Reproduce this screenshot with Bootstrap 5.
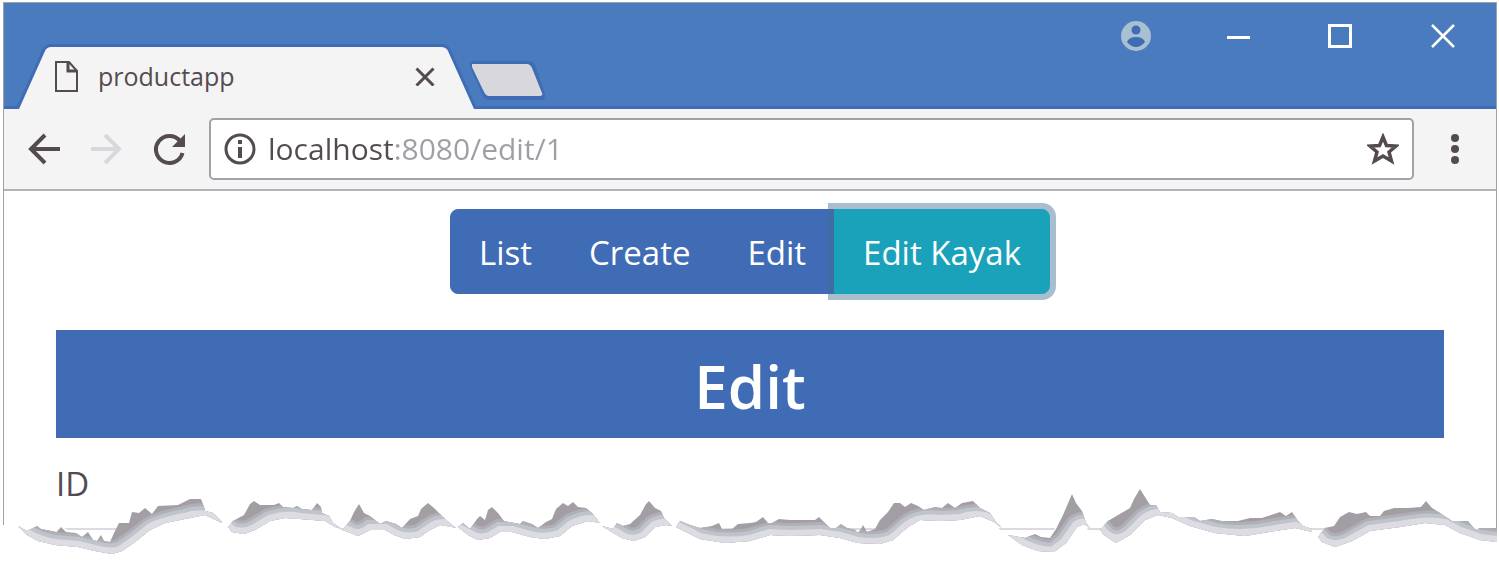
<!DOCTYPE html>
<html lang="en">
<head>
<meta charset="utf-8">
<meta name="viewport" content="width=device-width, initial-scale=1">
<title>productapp</title>
<link href="https://cdn.jsdelivr.net/npm/bootstrap@5.3.0/dist/css/bootstrap.min.css" rel="stylesheet">
<style>
  :root { --ink: #544b50; --frame: #4a7bbe; --edge: #3f6cb4; --line: #a3a1a8; }
  body { font-family: "Open Sans", "Noto Sans", sans-serif; color: var(--ink); background: #fff; }
  svg { display: block; flex: none; }
  .window { padding: 2px 2px 0 3px; }
  .window-frame { border: 1px solid var(--line); border-bottom: 0; }
  .titlebar { background: var(--frame); height: 106px; border-bottom: 3px solid var(--edge); }
  .titlebar button, .toolbar button { border: 0; background: none; padding: 0; }
  .tab { width: 460px; height: 66px; margin: 40px 0 0 12px; padding: 0 41px 0 38px; color: var(--ink); }
  .tab-shape { position: absolute; left: 0; top: 0; }
  .tab-name { font-size: 25px; line-height: 32px; margin-left: 18px; }
  .new-tab { margin: 56px 0 0 -9px; }
  .controls { gap: 72px; margin: 18px 39px 0 0; }
  .toolbar { background: #f4f4f5; height: 82px; padding: 0 27px 0 23px; border-bottom: 2px solid #b4b2b8; }
  .nav-icons { gap: 30px; margin-right: 23px; }
  .address { background: #fff; border: 2px solid var(--line); border-radius: 5px; height: 62px; padding: 0 13px; margin-right: 27px; }
  .address input { border: 0; outline: 0; min-width: 0; margin-left: 12px; padding: 0; font-size: 30px; line-height: 40px; color: #98969c;
    background: linear-gradient(90deg, var(--ink) 126px, #a09ea4 126px); -webkit-background-clip: text; background-clip: text; -webkit-text-fill-color: transparent; }
  .page { padding: 18px 52px 0; }
  .menu .btn { --bs-btn-color: #fff; --bs-btn-bg: #3f6cb4; --bs-btn-border-color: #3f6cb4; --bs-btn-hover-bg: #365d9c; --bs-btn-hover-color: #fff;
    font-size: 33px; line-height: 48px; padding: 19px 28px 16px; border-radius: 8px; }
  .menu .btn.current { --bs-btn-bg: #1aa2ba; --bs-btn-border-color: #1aa2ba; box-shadow: 0 0 0 6px rgba(63, 108, 145, .45); z-index: 2; }
  .banner { background: #3f6cb4; font-size: 60px; font-weight: 600; line-height: 104px; margin: 36px 0 0; padding-top: 4px; }
  .page label { font-size: 33px; line-height: 45px; margin: 23px 0 22px; }
  .page .form-control { border: 2px solid #dbdae0; border-radius: 6px; height: 30px; }
  .tear { position: relative; width: 100%; height: 81px; margin-top: -78px; z-index: 3; }
</style>
</head>
<body>
<div class="window">
  <div class="window-frame">
    <header class="titlebar d-flex align-items-start">
      <div class="tab position-relative d-flex align-items-center">
        <svg class="tab-shape" width="460" height="66" viewBox="0 0 460 66"><path d="M3 66 L29 8 Q31 4 35 4 H425 Q430 4 432 8 L458 66" fill="#f4f4f5" stroke="#3f6cb4" stroke-width="6"/><path d="M3 66 L29 8 Q31 4 35 4 H425 Q430 4 432 8 L458 66Z" fill="#f4f4f5"/></svg>
        <svg class="position-relative" width="26" height="34" viewBox="0 0 26 34" fill="none" stroke="#544b50" stroke-width="2"><path d="M2 3H15L23 12V32H2Z"/><path d="M14 3V12H23" stroke-width="3"/></svg>
        <span class="tab-name position-relative flex-grow-1">productapp</span>
        <button class="position-relative" aria-label="Close tab"><svg width="20" height="20" viewBox="0 0 20 20" stroke="#544b50" stroke-width="3"><path d="M1.500 2.500L18.500 19.500M18.500 2.500L1.500 19.500"/></svg></button>
      </div>
      <button class="new-tab" aria-label="New tab"><svg width="78" height="44" viewBox="0 0 78 44"><path d="M6 2H61Q66 2 68 6L78 35Q79 41 72 41H23Q18 41 16 37L3 8Q2 2 6 2Z" fill="#3f6cb4"/><path d="M5 5H60Q63 5 65 9L75 34Q76 37 73 37H22Q19 37 17 33L5 8Z" fill="#d7d7dc"/></svg></button>
      <div class="controls d-flex align-items-center ms-auto">
        <button aria-label="Account"><svg width="30" height="30" viewBox="0 0 30 30"><circle cx="15" cy="15" r="15" fill="#a9bfd2"/><circle cx="15" cy="9" r="4.500" fill="#3f6cb4"/><path d="M6 21Q8 16 15 16T24 21Q20 26 15 26T6 21Z" fill="#3f6cb4"/></svg></button>
        <button aria-label="Minimize"><svg width="30" height="30" viewBox="0 0 30 30"><path d="M4 16.500H27" stroke="#fff" stroke-width="3"/></svg></button>
        <button aria-label="Maximize"><svg width="30" height="30" viewBox="0 0 30 30"><path d="M4.500 4.500H25.500V25.500H4.500Z" fill="none" stroke="#fff" stroke-width="3"/></svg></button>
        <button aria-label="Close"><svg width="30" height="30" viewBox="0 0 30 30"><path d="M5 4L27 26M27 4L5 26" stroke="#fff" stroke-width="2.500"/></svg></button>
      </div>
    </header>
    <div class="toolbar d-flex align-items-center">
      <div class="nav-icons d-flex align-items-center">
        <button aria-label="Back"><svg width="34" height="32" viewBox="0 0 34 32" fill="none" stroke="#544b50" stroke-width="4"><path d="M18 2L4 16L18 30M4 16H33"/></svg></button>
        <button aria-label="Forward"><svg width="32" height="32" viewBox="0 0 32 32" fill="none" stroke="#d7d7dc" stroke-width="4"><path d="M14 2L28 16L14 30M28 16H0"/></svg></button>
        <button aria-label="Reload"><svg width="33" height="33" viewBox="0 0 33 33"><path d="M27 8A13.500 13.500 0 1 0 29.500 20" fill="none" stroke="#544b50" stroke-width="4"/><path d="M32 1V14H19Z" fill="#544b50"/></svg></button>
      </div>
      <div class="address d-flex align-items-center flex-grow-1">
        <svg width="32" height="32" viewBox="0 0 32 32"><circle cx="16" cy="16" r="14" fill="none" stroke="#544b50" stroke-width="3"/><path d="M14 7H18V11H14ZM14 14H18V25H14Z" fill="#544b50"/></svg>
        <input class="flex-grow-1" type="text" aria-label="Address" value="localhost:8080/edit/1">
        <button aria-label="Bookmark"><svg width="32" height="32" viewBox="0 0 32 32"><path d="M16 4L19.500 12.500L29 13L22 19L24.500 28L16 23L7.500 28L10 19L3 13L12.500 12.500Z" fill="none" stroke="#544b50" stroke-width="3.500"/></svg></button>
      </div>
      <button aria-label="Menu"><svg width="28" height="32" viewBox="0 0 28 32" fill="#544b50"><circle cx="14" cy="5" r="4"/><circle cx="14" cy="16" r="4"/><circle cx="14" cy="27" r="4"/></svg></button>
    </div>
    <main class="page">
      <div class="text-center">
        <div class="menu btn-group" role="group" aria-label="Views">
          <button class="btn">List</button>
          <button class="btn">Create</button>
          <button class="btn">Edit</button>
          <button class="btn current">Edit Kayak</button>
        </div>
      </div>
      <h1 class="banner text-center text-white">Edit</h1>
      <label class="d-block" for="product-id">ID</label>
      <input class="form-control" id="product-id" type="text">
    </main>
  </div>
</div>
<svg class="tear" viewBox="0 480 1499 81" preserveAspectRatio="none" aria-hidden="true">
  <defs>
    <clipPath id="torn"><path d="M18 526 27 531 33 528 37 526 41 529 52 531 57 532 61 527 66 532 76 533 82 537 88 532 93 540 97 541 101 535 104 541 110 542 114 533 119 523 129 523 132 512 139 513 145 508 152 514 158 506 178 505 190 499 201 499 204 507 205 511 213 513 222 522 L222 523 205 515 185 519 165 523 150 530 135 542 122 551 112 554 95 551 78 547 55 545 38 541 27 535Z
      M228 527 233 521 244 515 250 504 254 501 260 505 274 505 279 503 283 507 293 508 297 506 302 509 312 510 317 503 321 507 322 513 329 516 333 523 342 529 L335 527 325 521 300 519 285 518 270 521 255 530 244 534 232 532Z
      M342 530 350 521 354 512 359 504 364 513 370 516 380 524 386 521 396 524 402 528 410 519 418 516 421 509 428 503 434 508 440 514 445 519 452 525 456 528 L452 527 440 525 430 530 420 537 405 539 394 535 385 530 370 530 358 536 348 532Z
      M458 527 463 523 470 529 477 519 480 516 485 520 488 510 492 507 498 513 504 521 520 524 523 521 532 524 538 528 546 522 552 519 556 509 563 503 568 506 573 502 578 507 586 508 592 513 600 523 L588 521 572 526 560 536 545 539 530 537 512 532 500 532 490 538 478 540 468 535Z
      M602 526 613 529 617 523 623 526 630 524 640 515 646 504 649 501 655 508 661 511 664 518 672 526 L666 525 655 527 645 537 634 541 622 538 610 531Z
      M676 527 680 521 690 525 700 528 712 526 719 523 722 529 732 529 738 524 750 523 756 522 763 517 768 523 772 523 779 519 790 520 815 520 819 517 824 522 830 528 836 528 841 524 847 528 855 530 858 533 861 529 863 525 867 532 875 529 880 520 888 512 894 503 900 503 905 507 911 503 918 506 924 510 935 507 942 508 948 503 955 508 962 503 973 501 980 508 990 513 996 522 1002 528 L994 522 980 516 960 520 940 521 920 520 908 527 893 540 880 544 858 543 840 538 820 535 790 536 770 535 750 541 725 543 700 539 688 533Z
      M1008 535 1025 538 1035 534 1041 537 1050 538 1056 529 1063 515 1069 501 1072 494 1076 503 1082 511 1086 523 1090 528 L1084 524 1077 527 1066 543 1054 552 1038 551 1022 545Z
      M1100 530 1108 521 1118 515 1130 508 1134 499 1140 489 1145 497 1150 505 1156 505 1160 512 1172 513 1178 517 1194 517 1200 521 1212 519 1222 521 1238 521 1250 518 1262 518 1271 515 1280 512 1286 516 1292 512 1298 521 1303 526 1312 529 L1312 532 1295 528 1275 531 1245 536 1215 533 1190 526 1172 518 1158 515 1145 520 1130 535 1116 543 1104 535Z
      M1318 537 1325 528 1334 526 1340 517 1349 512 1357 514 1366 512 1370 516 1380 516 1384 511 1394 508 1408 508 1421 507 1426 501 1432 508 1440 513 1452 521 1468 521 1472 526 1476 530 1480 528 1497 528 L1497 542 1480 540 1460 533 1445 525 1425 523 1400 527 1370 531 1352 541 1335 547 1322 542Z"/></clipPath>
    <path id="underside" d="M18 526 27 535 Q38 542 55 545 L78 547 95 551 Q112 556 122 551 L135 542 150 530 Q158 524 185 519 Q205 512 222 523 L232 532 Q244 536 255 530 L270 521 Q285 516 300 519 L325 521 335 527 348 532 Q358 539 370 530 L385 530 394 535 Q405 541 420 537 L430 530 Q440 522 452 527 L468 535 Q478 542 490 538 L500 532 512 532 530 537 Q545 541 560 536 L572 526 Q588 518 600 523 L610 531 622 538 Q634 544 645 537 L655 527 Q666 522 676 527 L688 533 700 539 Q725 545 750 541 L770 535 790 536 820 535 840 538 858 543 Q880 546 893 540 L908 527 Q920 518 940 521 L960 520 Q980 513 994 522 L1008 535 1022 545 Q1045 555 1054 552 L1066 543 1077 527 Q1084 521 1100 530 L1104 535 Q1116 546 1130 535 L1145 520 Q1158 511 1172 518 L1190 526 1215 533 Q1245 538 1275 531 L1295 528 1318 537 1322 542 Q1335 551 1352 541 L1370 531 1400 527 Q1430 521 1445 525 L1460 533 1480 540 1497 542" fill="none"/>
  </defs>
  <path fill="#fff" d="M0 525 H18 L27 531 37 526 57 532 61 527 76 533 97 541 110 542 119 523 129 523 132 512 158 506 201 499 213 513 228 527 244 515 254 501 312 510 342 530 359 504 380 524 402 528 428 503 458 527 470 529 492 507 504 521 538 528 563 503 592 513 613 529 649 501 676 527 732 529 763 517 819 517 830 528 858 533 863 527 867 532 875 529 894 503 973 501 1002 532 1025 538 1050 538 1072 494 1088 530 1100 530 1140 489 1160 512 1200 521 1292 512 1303 529 1312 532 1318 537 1325 528 1349 512 1426 501 1452 521 1476 530 1499 528 V561 H0Z"/>
  <g clip-path="url(#torn)">
    <path fill="#a29ea3" d="M0 480H1499V561H0Z"/>
    <use href="#underside" stroke="#b0afb5" stroke-width="26"/>
    <use href="#underside" stroke="#bfc3cb" stroke-width="20"/>
    <use href="#underside" stroke="#dddce3" stroke-width="12"/>
  </g>
</svg>
<script src="https://cdn.jsdelivr.net/npm/bootstrap@5.3.0/dist/js/bootstrap.bundle.min.js"></script>
</body>
</html>
